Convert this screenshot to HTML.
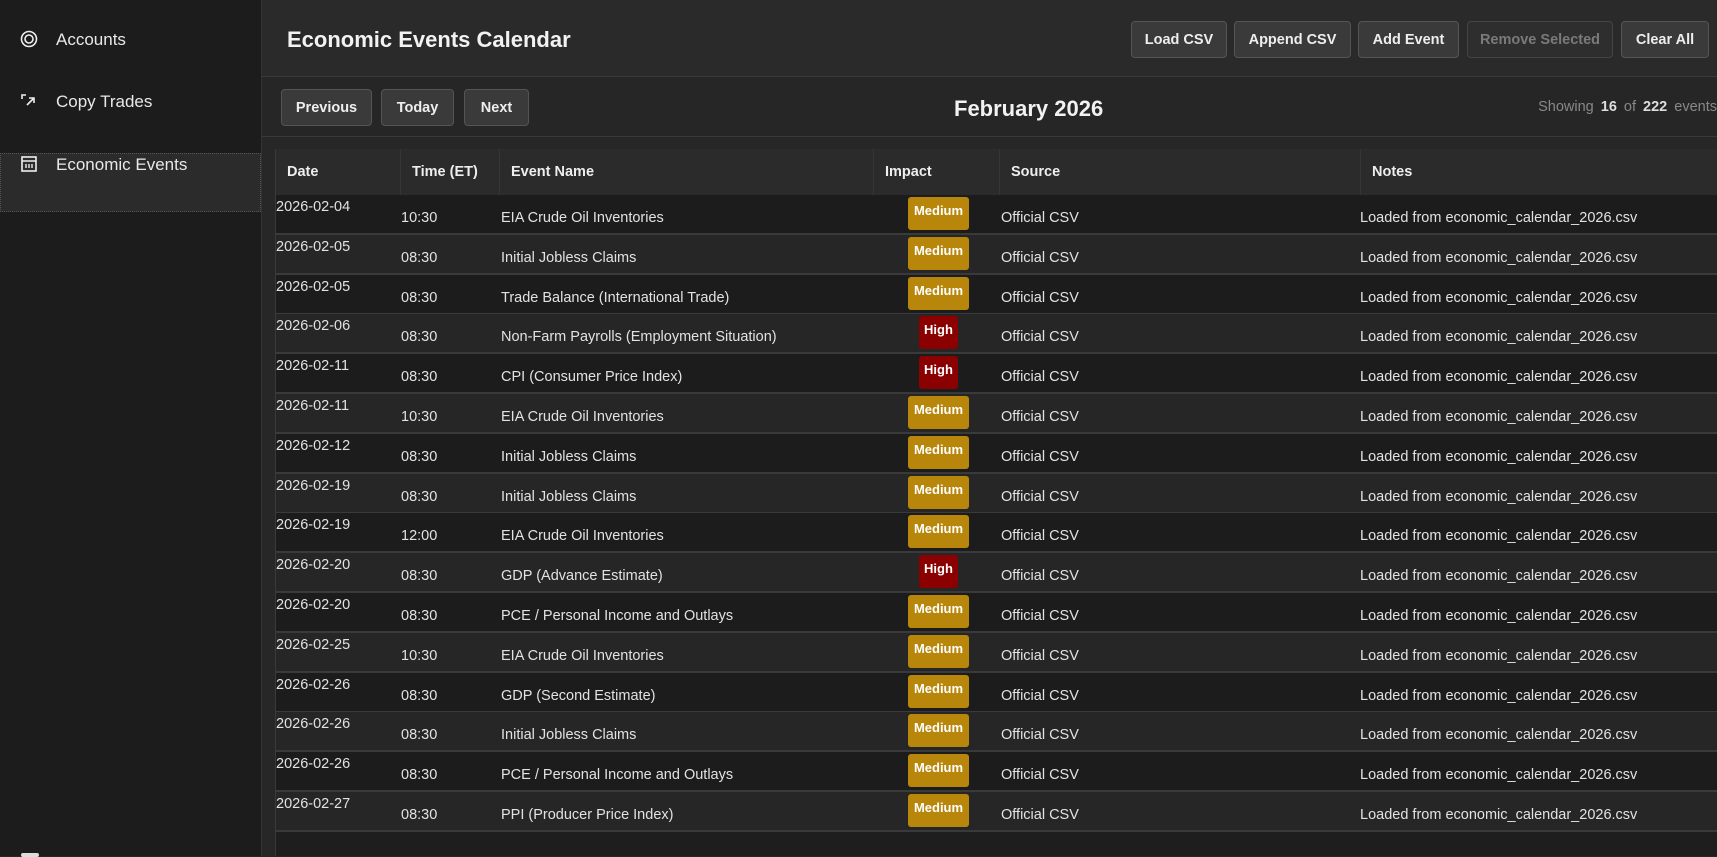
<!DOCTYPE html>
<html><head><meta charset="utf-8"><style>
*{margin:0;padding:0;box-sizing:border-box}
body{width:1717px;height:856px;overflow:hidden;background:#272727;font-family:"Liberation Sans",sans-serif;color:#e6e6e6;position:relative}
.side{position:absolute;left:0;top:0;width:262px;height:856px;background:#1c1c1c;border-right:1px solid #333}
.nav{position:absolute;left:20px;font-size:17px;color:#e8e8e8}
.nav span{position:absolute;left:36px;top:0;white-space:nowrap}
.sel{position:absolute;left:0;top:153px;width:261px;height:59px;background:#2b2b2b;border:1px dotted #555}
.hdr{position:absolute;left:262px;top:0;width:1455px;height:77px;background:#2a2a2a;border-bottom:1px solid #3a3a3a}
.title{position:absolute;left:287px;top:27px;font-size:22px;font-weight:bold;color:#f2f2f2}
.btn{position:absolute;height:37px;background:#3a3a3a;border:1px solid #555;border-radius:4px;font-size:14.5px;font-weight:bold;color:#eee;display:flex;align-items:center;justify-content:center}
.dis{color:#7a7a7a;background:#2e2e2e;border-color:#444}
.navrow{position:absolute;left:262px;top:78px;width:1455px;height:59px;background:#262626;border-bottom:1px solid #3a3a3a}
.month{position:absolute;left:954px;top:96px;font-size:22px;font-weight:bold;color:#f2f2f2}
.show{position:absolute;right:0;top:99px;font-size:14.5px;color:#888;word-spacing:3px}
.show b{color:#ddd}
.tbl{position:absolute;left:275px;top:149px;width:1442px;height:707px;background:#1e1e1e;border-left:1px solid #3a3a3a}
.th{position:absolute;top:149px;height:46px;background:#2b2b2b;border-right:1px solid #363636;font-size:14.5px;font-weight:bold;padding-left:11px;line-height:46px;color:#eee}
.row{position:absolute;left:276px;width:1441px;height:40px;border-bottom:2px solid #3a3a3a;font-size:14.5px;color:#e2e2e2}
.row div{position:absolute;white-space:nowrap}
.b{left:632px;top:2px;height:33px;border-radius:3px;color:#fff;font-weight:bold;font-size:13px;text-align:center;padding-top:6px}
.m{background:#b8860b;width:61px}
.h{background:#8b0000;width:39px;left:643px}
</style></head><body>
<div class="side">
<div class="sel"></div>
<div class="nav" style="top:30px"><svg width="18" height="18" viewBox="0 0 18 18" style="position:absolute;top:0"><circle cx="9" cy="9" r="7.5" fill="none" stroke="#eee" stroke-width="1.6"/><circle cx="9" cy="9" r="4" fill="none" stroke="#eee" stroke-width="1.6"/></svg><span>Accounts</span></div>
<div class="nav" style="top:92px"><svg width="18" height="18" viewBox="0 0 18 18" style="position:absolute;top:0"><path d="M2 7V3h4M7 13l7-7M9 6h5v5" fill="none" stroke="#eee" stroke-width="1.6"/></svg><span>Copy Trades</span></div>
<div class="nav" style="top:155px"><svg width="18" height="18" viewBox="0 0 18 18" style="position:absolute;top:0"><rect x="2" y="2" width="14" height="14" fill="none" stroke="#eee" stroke-width="1.6"/><path d="M2 6h14M6 9v4M9 9v4M12 9v4" stroke="#eee" stroke-width="1.4"/></svg><span>Economic Events</span></div>
<div style="position:absolute;left:21px;top:853px;width:18px;height:4px;background:#ddd;border-radius:2px"></div>
</div>
<div class="hdr"></div>
<div class="title">Economic Events Calendar</div>
<div class="btn" style="left:1131px;top:21px;width:96px">Load CSV</div>
<div class="btn" style="left:1234px;top:21px;width:117px">Append CSV</div>
<div class="btn" style="left:1358px;top:21px;width:101px">Add Event</div>
<div class="btn dis" style="left:1467px;top:21px;width:146px">Remove Selected</div>
<div class="btn" style="left:1621px;top:21px;width:88px">Clear All</div>
<div class="navrow"></div>
<div class="btn" style="left:281px;top:89px;width:91px">Previous</div>
<div class="btn" style="left:381px;top:89px;width:73px">Today</div>
<div class="btn" style="left:464px;top:89px;width:65px">Next</div>
<div class="month">February 2026</div>
<div class="show">Showing <b>16</b> of <b>222</b> events</div>
<div class="tbl"></div>
<div class="th" style="left:276px;width:125px">Date</div>
<div class="th" style="left:401px;width:99px">Time (ET)</div>
<div class="th" style="left:500px;width:374px">Event Name</div>
<div class="th" style="left:874px;width:126px">Impact</div>
<div class="th" style="left:1000px;width:361px">Source</div>
<div class="th" style="left:1361px;width:356px;border-right:0">Notes</div>
<div id="rows"></div>
<script>
var d=[["2026-02-04","10:30","EIA Crude Oil Inventories","M"],["2026-02-05","08:30","Initial Jobless Claims","M"],["2026-02-05","08:30","Trade Balance (International Trade)","M"],["2026-02-06","08:30","Non-Farm Payrolls (Employment Situation)","H"],["2026-02-11","08:30","CPI (Consumer Price Index)","H"],["2026-02-11","10:30","EIA Crude Oil Inventories","M"],["2026-02-12","08:30","Initial Jobless Claims","M"],["2026-02-19","08:30","Initial Jobless Claims","M"],["2026-02-19","12:00","EIA Crude Oil Inventories","M"],["2026-02-20","08:30","GDP (Advance Estimate)","H"],["2026-02-20","08:30","PCE / Personal Income and Outlays","M"],["2026-02-25","10:30","EIA Crude Oil Inventories","M"],["2026-02-26","08:30","GDP (Second Estimate)","M"],["2026-02-26","08:30","Initial Jobless Claims","M"],["2026-02-26","08:30","PCE / Personal Income and Outlays","M"],["2026-02-27","08:30","PPI (Producer Price Index)","M"]];
var h="";
d.forEach(function(r,i){var t=195+i*39.8;var bg=i%2?"#262626":"#1c1c1c";
h+='<div class="row" style="top:'+t+'px;background:'+bg+'"><div style="left:0;top:4px">'+r[0]+'</div><div style="left:125px;top:15px">'+r[1]+'</div><div style="left:225px;top:15px">'+r[2]+'</div>'+(r[3]=="M"?'<div class="b m">Medium</div>':'<div class="b h">High</div>')+'<div style="left:725px;top:15px">Official CSV</div><div style="left:1084px;top:15px">Loaded from economic_calendar_2026.csv</div></div>';});
document.getElementById("rows").innerHTML=h;
</script>
</body></html>
